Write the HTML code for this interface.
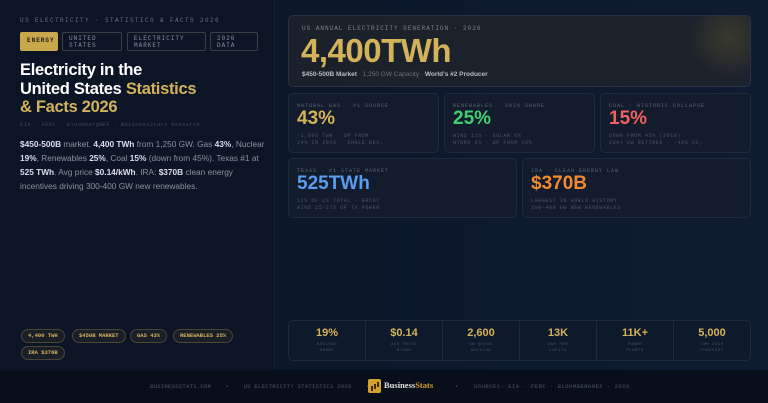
<!DOCTYPE html><html><head><style>
*{margin:0;padding:0;box-sizing:border-box}
body{width:768px;height:403px;overflow:hidden;background:#0c1628;font-family:"Liberation Sans",sans-serif;position:relative}
.m{font-family:"Liberation Mono",monospace}
.a{position:absolute}
.left{left:0;top:0;width:275px;height:370px;background:#0b1526;border-right:1px solid #16223a}
.right{left:276px;top:0;width:492px;height:370px;background:linear-gradient(90deg,#0c1729,#0e1b30)}
.tag{position:absolute;top:32px;height:19px;border:1px solid #3a3f44;border-radius:2px;color:#8a929c;font-size:6px;letter-spacing:1px;padding:2px 6px;line-height:7px}
.card{position:absolute;background:#121c2c;border:1px solid #1f2b3c;border-radius:5px}
.lbl{font-family:"Liberation Mono",monospace;font-size:5px;letter-spacing:1px;color:#5d6673;position:absolute;left:8px;top:9px}
.big{position:absolute;left:8px;font-weight:bold;font-size:19px}
.sub{font-family:"Liberation Mono",monospace;font-size:5px;letter-spacing:.6px;color:#4e5764;position:absolute;left:8px;line-height:7px}
.pill{position:absolute;height:14px;border:1px solid #4a4636;border-radius:7px;background:#1a1f27;color:#d4b25a;font-family:"Liberation Mono",monospace;font-size:5.5px;font-weight:bold;line-height:12px;padding:0 6px}
.st{position:absolute;top:322px;width:78px;text-align:center}
.st b{display:block;color:#d4b25a;font-size:11px;margin-top:5px}
.st i{display:block;font-style:normal;font-family:"Liberation Mono",monospace;font-size:4px;color:#4e5764;line-height:6px;margin-top:3px;letter-spacing:.5px}
</style></head><body>
<div class="a left"></div><div class="a right"></div>
<div class="a m" style="left:20px;top:17px;font-size:6px;letter-spacing:1.4px;color:#6b7480">US ELECTRICITY · STATISTICS &amp; FACTS 2026</div>
<div class="tag m" style="left:20px;width:38px;background:#c9a84c;border-color:#c9a84c;color:#1a1a1a;font-weight:bold;padding-top:4px">ENERGY</div>
<div class="tag m" style="left:62px;width:60px">UNITED<br>STATES</div>
<div class="tag m" style="left:127px;width:79px">ELECTRICITY<br>MARKET</div>
<div class="tag m" style="left:210px;width:48px">2026<br>DATA</div>
<div class="a" style="left:20px;top:61px;font-size:16.5px;font-weight:bold;color:#fff;line-height:18.5px;letter-spacing:-.3px">Electricity in the<br>United States <span style="color:#d4b25a">Statistics</span><br><span style="color:#d4b25a">&amp; Facts 2026</span></div>
<div class="a m" style="left:20px;top:121px;font-size:5.5px;color:#3f4855;letter-spacing:.3px">EIA · FERC · BloombergNEF · BusinessStats Research</div>
<div class="a" style="left:20px;top:137px;width:250px;font-size:8.3px;line-height:14px;color:#8a929c"><b style="color:#dde">$450-500B</b> market. <b style="color:#dde">4,400 TWh</b> from 1,250 GW. Gas <b style="color:#dde">43%</b>, Nuclear <b style="color:#dde">19%</b>, Renewables <b style="color:#dde">25%</b>, Coal <b style="color:#dde">15%</b> (down from 45%). Texas #1 at <b style="color:#dde">525 TWh</b>. Avg price <b style="color:#dde">$0.14/kWh</b>. IRA: <b style="color:#dde">$370B</b> clean energy incentives driving 300-400 GW new renewables.</div>
<div class="pill" style="left:21px;top:329px">4,400 TWH</div>
<div class="pill" style="left:72px;top:329px">$450B MARKET</div>
<div class="pill" style="left:130px;top:329px">GAS 43%</div>
<div class="pill" style="left:173px;top:329px">RENEWABLES 25%</div>
<div class="pill" style="left:21px;top:346px">IRA $370B</div>

<div class="card" style="left:288px;top:15px;width:463px;height:72px;background:radial-gradient(circle at 440px 22px,#3a3a2c 0,#1d232c 40px,#1a212b 100%);border-color:#2a3240">
<div class="lbl m" style="left:13px;top:9px;font-size:6px;color:#7a828c">US ANNUAL ELECTRICITY GENERATION · 2026</div>
<div class="a" style="left:12px;top:16px;font-size:33px;font-weight:bold;color:#d4b25a;letter-spacing:-.5px">4,400TWh</div>
<div class="a" style="left:13px;top:55px;font-size:6.5px;color:#6a727c"><b style="color:#b8bec6">$450-500B Market</b> · 1,250 GW Capacity · <b style="color:#b8bec6">World's #2 Producer</b></div></div>

<div class="card" style="left:288px;top:93px;width:151px;height:60px"><div class="lbl">NATURAL GAS · #1 SOURCE</div><div class="big" style="top:14px;color:#d4b25a">43%</div><div class="sub" style="top:39px">~1,890 TWH · UP FROM<br>24% IN 2010 · SHALE REV.</div></div>
<div class="card" style="left:444px;top:93px;width:151px;height:60px"><div class="lbl">RENEWABLES · 2026 SHARE</div><div class="big" style="top:14px;color:#3fcf72">25%</div><div class="sub" style="top:39px">WIND 11% · SOLAR 6%<br>HYDRO 6% · UP FROM 10%</div></div>
<div class="card" style="left:600px;top:93px;width:151px;height:60px"><div class="lbl">COAL · HISTORIC COLLAPSE</div><div class="big" style="top:14px;color:#ef6060">15%</div><div class="sub" style="top:39px">DOWN FROM 45% (2010)<br>100+ GW RETIRED · -40% CO₂</div></div>
<div class="card" style="left:288px;top:158px;width:229px;height:60px"><div class="lbl">TEXAS · #1 STATE MARKET</div><div class="big" style="top:14px;color:#5a9cf0">525TWh</div><div class="sub" style="top:39px">12% OF US TOTAL · ERCOT<br>WIND 25-27% OF TX POWER</div></div>
<div class="card" style="left:522px;top:158px;width:229px;height:60px"><div class="lbl">IRA · CLEAN ENERGY LAW</div><div class="big" style="top:14px;color:#f08a30">$370B</div><div class="sub" style="top:39px">LARGEST IN WORLD HISTORY<br>300-400 GW NEW RENEWABLES</div></div>

<div class="card" style="left:288px;top:320px;width:463px;height:41px;background:#0e192b"></div>
<div class="a" style="left:365px;top:321px;width:1px;height:39px;background:#1f2b3c;box-shadow:77px 0 #1f2b3c,154px 0 #1f2b3c,231px 0 #1f2b3c,308px 0 #1f2b3c"></div>
<div class="st" style="left:288px"><b>19%</b><i>NUCLEAR<br>SHARE</i></div>
<div class="st" style="left:365px"><b>$0.14</b><i>AVG PRICE<br>$/KWH</i></div>
<div class="st" style="left:442px"><b>2,600</b><i>GW QUEUE<br>BACKLOG</i></div>
<div class="st" style="left:519px"><b>13K</b><i>KWH PER<br>CAPITA</i></div>
<div class="st" style="left:596px"><b>11K+</b><i>POWER<br>PLANTS</i></div>
<div class="st" style="left:673px"><b>5,000</b><i>TWH 2030<br>FORECAST</i></div>

<div class="a" style="left:0;top:370px;width:768px;height:33px;background:#080f1b"></div>
<div class="a m" style="left:150px;top:383px;font-size:5.5px;color:#4e5764;letter-spacing:.3px;white-space:pre">BUSINESSSTATS.COM    •    US ELECTRICITY STATISTICS 2026    •</div>
<div class="a" style="left:368px;top:379px;width:13px;height:14px;background:#d4a02c;border-radius:2px"><div class="a" style="left:3px;top:7px;width:2px;height:5px;background:#3a2a08;box-shadow:3px -2px 0 0 #3a2a08,6px -4px 0 0 #3a2a08"></div></div>
<div class="a" style="left:384px;top:380px;font-family:'Liberation Serif',serif;font-weight:bold;font-size:8.5px;color:#e0e0e0">Business<span style="color:#d4a02c">Stats</span></div>
<div class="a m" style="left:455px;top:383px;font-size:5.5px;color:#4e5764;letter-spacing:.5px;white-space:pre">•    SOURCES: EIA · FERC · BLOOMBERGNEF · 2026</div>
</body></html>
